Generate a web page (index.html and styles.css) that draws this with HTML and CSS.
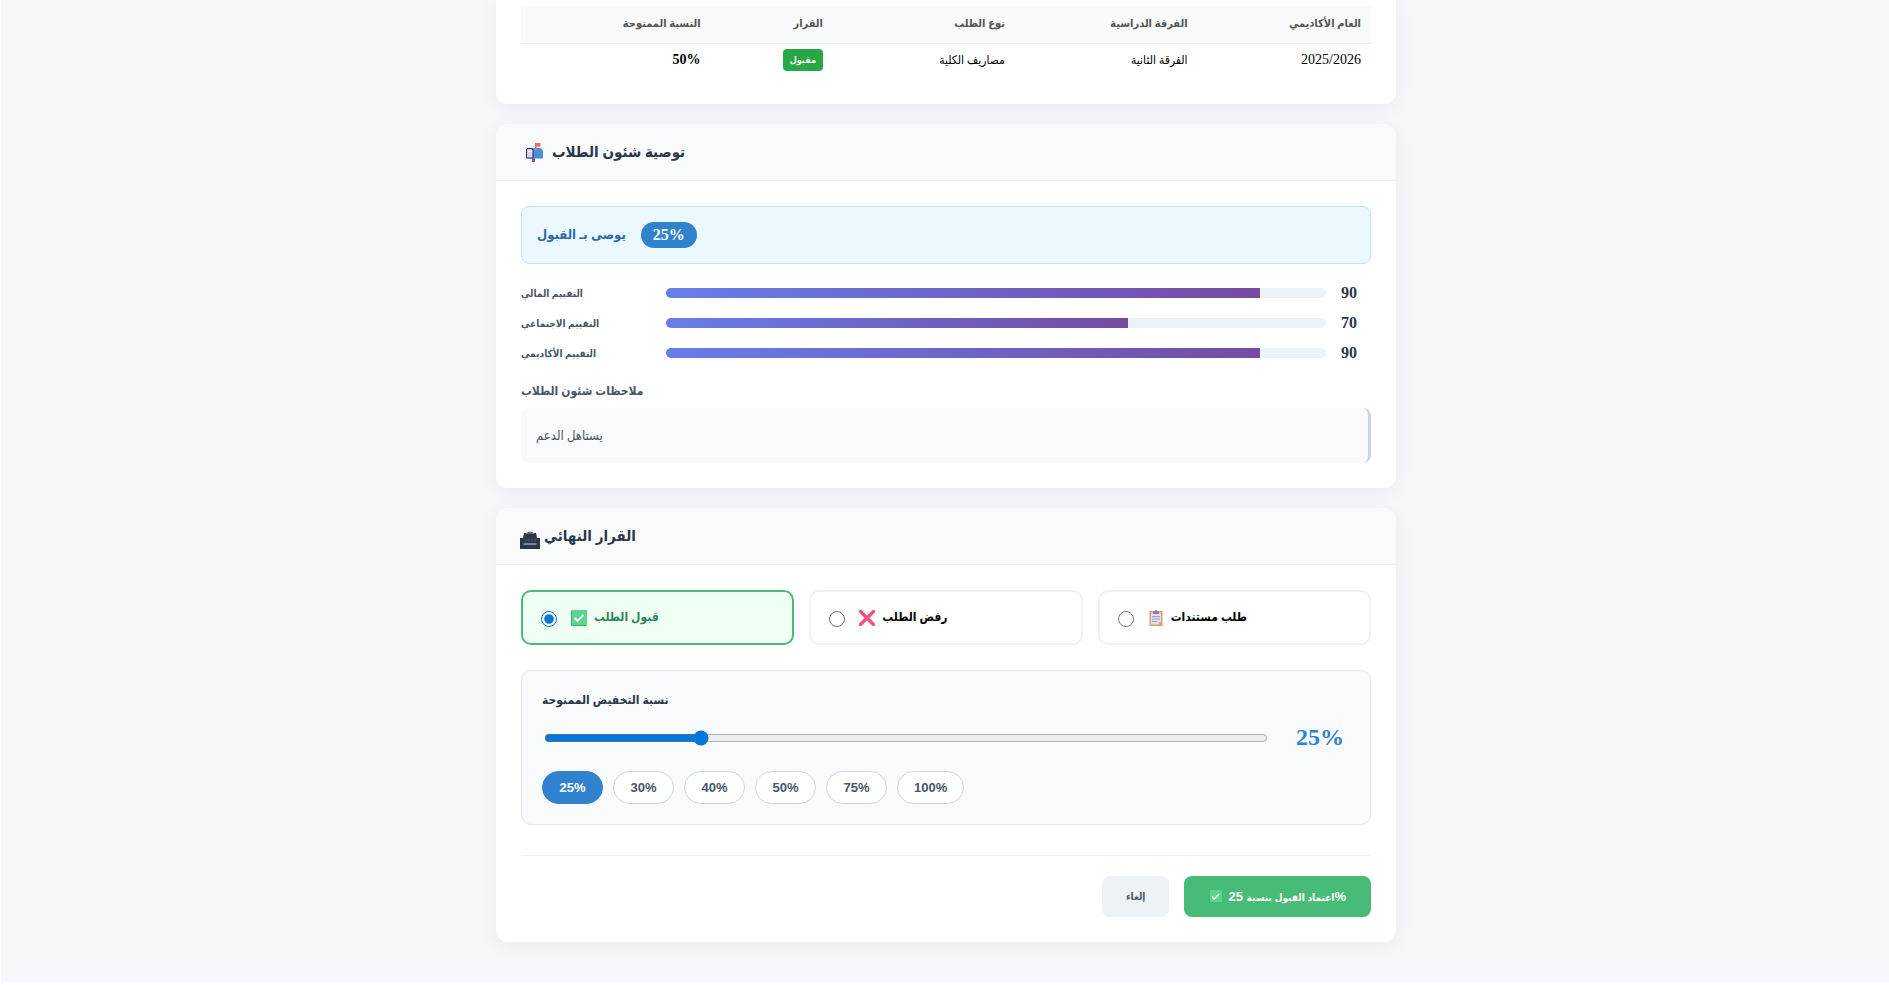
FILE: index.html
```html
<!DOCTYPE html>
<html lang="ar">
<head>
  <meta charset="UTF-8">
  <title>مراجعة طلب الدعم</title>
  <link rel="stylesheet" href="styles.css">
</head>
<body>
  <div class="page">
    <main class="container">

      <section class="card card-history">
        <table class="history-table" dir="rtl">
          <colgroup>
            <col class="col-year">
            <col class="col-level">
            <col class="col-type">
            <col class="col-decision">
            <col class="col-percent">
          </colgroup>
          <thead>
            <tr>
              <th>العام الأكاديمي</th>
              <th>الفرقة الدراسية</th>
              <th>نوع الطلب</th>
              <th>القرار</th>
              <th>النسبة الممنوحة</th>
            </tr>
          </thead>
          <tbody>
            <tr>
              <td class="num">2025/2026</td>
              <td>الفرقة الثانية</td>
              <td>مصاريف الكلية</td>
              <td><span class="badge">مقبول</span></td>
              <td class="num"><strong dir="ltr">50%</strong></td>
            </tr>
          </tbody>
        </table>
      </section>

      <section class="card">
        <div class="card-header">
          <svg class="icon-mailbox" viewBox="0 0 18 20" aria-hidden="true">
            <rect x="7" y="15" width="3" height="5" fill="#8b5a5a"/>
            <path d="M4 6h10a4 4 0 0 1 4 4v6.500H4z" fill="#4a90d9"/>
            <path d="M1.500 8q0-1.500 1.500-1.500h3q2 0 2 2v7.500H1.500z" fill="#d9d3e6" stroke="#33207a"/>
            <rect x="3" y="9" width="4" height="1" fill="#fff"/>
            <rect x="10" y="1" width="1.500" height="8" fill="#9b8aa0"/>
            <rect x="11" y="1" width="4.500" height="3.500" fill="#f4694c"/>
          </svg>
          <h2>توصية شئون الطلاب</h2>
        </div>
        <div class="card-body">
          <div class="recommendation">
            <span class="rec-text">يوصى بـ القبول</span>
            <span class="rec-percent">25%</span>
          </div>

          <div class="scores">
            <div class="score-row">
              <span class="score-label">التقييم المالي</span>
              <div class="score-bar"><div class="score-fill" style="width: 90%"></div></div>
              <span class="score-value">90</span>
            </div>
            <div class="score-row">
              <span class="score-label">التقييم الاجتماعي</span>
              <div class="score-bar"><div class="score-fill" style="width: 70%"></div></div>
              <span class="score-value">70</span>
            </div>
            <div class="score-row">
              <span class="score-label">التقييم الأكاديمي</span>
              <div class="score-bar"><div class="score-fill" style="width: 90%"></div></div>
              <span class="score-value">90</span>
            </div>
          </div>

          <h3 class="notes-title">ملاحظات شئون الطلاب</h3>
          <p class="notes">يستاهل الدعم</p>
        </div>
      </section>

      <section class="card">
        <div class="card-header header-decision">
          <svg class="icon-ballot" viewBox="0 -7 20 25" aria-hidden="true">
            <path d="M0 7h3l1-5h2.500Q10-.5 13.500 2H16l1 5h3v11H0z" fill="#2d3748"/>
            <path d="M6 2.500q4-1.500 8 0" stroke="#8d97a5" fill="none"/>
            <path d="M6 7v4M9 7v4M12 7v4M15 7v4" stroke="#46505f" fill="none"/>
            <path d="M3.500 13h13" stroke="#cbd5e0"/>
          </svg>
          <h2>القرار النهائي</h2>
        </div>
        <div class="card-body">
          <form>
            <div class="options">
              <label class="option selected">
                <input type="radio" name="decision" value="accept" checked>
                <svg class="icon" viewBox="0 0 16 16" aria-hidden="true">
                  <rect width="16" height="16" rx="1" fill="#3fae72"/>
                  <rect x="1" width="15" height="15" fill="#58d68d"/>
                  <path d="M3.500 8l3 3 6-6" fill="none" stroke="#fff" stroke-width="1.800"/>
                </svg>
                <span>قبول الطلب</span>
              </label>
              <label class="option">
                <input type="radio" name="decision" value="reject">
                <svg class="icon" viewBox="0 0 16 16" aria-hidden="true">
                  <path d="M1.500 1.500l13 13M14.500 1.500l-13 13" stroke="#f8507a" stroke-width="3.400" stroke-linecap="round"/>
                </svg>
                <span>رفض الطلب</span>
              </label>
              <label class="option">
                <input type="radio" name="decision" value="documents">
                <svg class="icon" viewBox="0 0 16 16" aria-hidden="true">
                  <rect x="1.500" y="1" width="13" height="15" fill="#e39a67"/>
                  <path d="M3 2.500h10v9.500l-2.500 2.500H3z" fill="#e3dcee"/>
                  <path d="M10.500 14.500V12H13z" fill="#c3b5d6"/>
                  <path d="M5 1.500h1.500a1.500 1.500 0 0 1 3 0H11V4H5z" fill="#8b7d95"/>
                  <path d="M4 6.500h8M4 9h8M4 11.500h5" stroke="#a99cbc"/>
                </svg>
                <span>طلب مستندات</span>
              </label>
            </div>

            <div class="discount">
              <label class="discount-label" for="percent">نسبة التخفيض الممنوحة</label>
              <div class="slider-row">
                <input type="range" id="percent" min="5" max="100" step="5" value="25">
                <output class="slider-value" for="percent">25%</output>
              </div>
              <div class="presets">
                <button type="button" class="preset active">25%</button>
                <button type="button" class="preset">30%</button>
                <button type="button" class="preset">40%</button>
                <button type="button" class="preset">50%</button>
                <button type="button" class="preset">75%</button>
                <button type="button" class="preset">100%</button>
              </div>
            </div>

            <div class="actions">
              <button type="button" class="btn btn-cancel">إلغاء</button>
              <button type="submit" class="btn btn-submit">
                <svg class="icon-small" viewBox="0 0 16 16" aria-hidden="true">
                  <rect width="16" height="16" rx="1" fill="#3fae72"/>
                  <rect x="1" width="15" height="15" fill="#58d68d"/>
                  <path d="M3.500 8l3 3 6-6" fill="none" stroke="#fff" stroke-width="1.800"/>
                </svg>
                <span class="submit-text"><bdi>25</bdi> <bdi class="submit-label">اعتماد القبول بنسبة</bdi><bdi>%</bdi></span>
              </button>
            </div>
          </form>
        </div>
      </section>

    </main>
  </div>
</body>
</html>
```
FILE: styles.css
```css
* { box-sizing: border-box; }
body {
  margin: 0;
  background: #fff;
  font-family: "Liberation Serif", "DejaVu Sans Condensed", "DejaVu Sans", serif;
  font-size: 16px;
}
.page {
  background: #f5f7fb;
  border-left: 1px solid #fff;
  padding: 0 0 40px 2px;
}
.container {
  max-width: 900px;
  margin: 0 auto;
  display: flex;
  flex-direction: column;
  gap: 20px;
}
.card {
  background: #fff;
  border-radius: 12px;
  overflow: hidden;
  box-shadow: 0 4px 20px rgba(0,0,0,0.05);
}
.card-history {
  border-radius: 0 0 12px 12px;
  padding: 6px 25px 25px;
}
.history-table {
  width: 100%;
  table-layout: fixed;
  border-collapse: collapse;
  font-size: 12px;
}
.col-year { width: 20.4%; }
.col-level { width: 21.5%; }
.col-type { width: 21.4%; }
.col-decision { width: 14.4%; }
.col-percent { width: 22.3%; }
.history-table th, .history-table td {
  height: 36px;
  padding: 0 10px 2px;
  text-align: right;
}
.history-table th {
  height: 37px;
  background: #f8f9fa;
  border-bottom: 1px solid #e9ecef;
  color: #555;
  font-size: 11px;
  font-weight: bold;
}
.history-table .num { font-size: 14px; }
.badge {
  display: inline-block;
  background: #28a745;
  color: #fff;
  padding: 0 7px;
  border-radius: 4px;
  font-size: 9px;
  line-height: 22px;
  font-weight: bold;
}
.card-header {
  display: flex;
  align-items: center;
  gap: 9px;
  height: 57px;
  padding: 0 29px;
  background: #f8fafc;
  border-bottom: 1px solid #edf2f7;
}
.header-decision { gap: 4px; padding: 0 24px; }
.card-header h2 {
  margin: 0;
  font-size: 15px;
  color: #2d3748;
}
.icon-mailbox { width: 18px; height: 20px; }
.icon-ballot { width: 20px; height: 25px; }
.card-body { padding: 25px; }
.recommendation {
  display: flex;
  align-items: center;
  gap: 15px;
  padding: 15px;
  margin-bottom: 20px;
  background: #ebf8ff;
  border: 1px solid #bee3f8;
  border-radius: 8px;
}
.rec-text {
  color: #2b6cb0;
  font-size: 13px;
  font-weight: bold;
}
.rec-percent {
  background: #3182ce;
  color: #fff;
  padding: 4px 12px;
  border-radius: 20px;
  font-weight: bold;
  line-height: 18px;
}
.scores {
  display: flex;
  flex-direction: column;
  gap: 12px;
  margin-bottom: 20px;
}
.score-row {
  display: flex;
  align-items: center;
  gap: 15px;
  height: 18px;
}
.score-label {
  width: 130px;
  font-size: 10px;
  font-weight: bold;
  color: #4a5568;
}
.score-bar {
  flex: 1;
  height: 10px;
  background: #edf2f7;
  border-radius: 5px;
  overflow: hidden;
}
.score-fill {
  height: 100%;
  background: linear-gradient(90deg, #667eea, #764ba2);
}
.score-value {
  width: 30px;
  font-weight: bold;
  color: #2d3748;
}
.notes-title {
  margin: 0 0 8px;
  font-size: 12px;
  line-height: 18px;
  color: #4a5568;
}
.notes {
  margin: 0;
  padding: 15px;
  font-size: 13px;
  line-height: 25px;
  color: #4a5568;
  background: #f8fafc;
  border-right: 3px solid #cbd5e0;
  border-radius: 8px;
}
.options {
  display: grid;
  grid-template-columns: repeat(3, 1fr);
  gap: 15px;
  margin-bottom: 25px;
}
.option {
  display: flex;
  align-items: center;
  height: 55px;
  padding: 0 18px;
  border: 2px solid #edf2f7;
  border-radius: 10px;
  font-size: 12px;
  font-weight: bold;
  cursor: pointer;
}
.option input {
  width: 16px;
  height: 16px;
  margin: 3px 14px 0 0;
  accent-color: #0078d7;
}
.option .icon { margin-right: 7px; }
.option.selected {
  border-color: #48bb78;
  background: #f0fff4;
  color: #2f855a;
}
.icon { width: 16px; height: 16px; }
.icon-small { width: 13px; height: 13px; }
.discount {
  padding: 20px;
  background: #f8fafc;
  border: 1px solid #e2e8f0;
  border-radius: 10px;
}
.discount-label {
  display: block;
  margin-bottom: 15px;
  font-size: 12px;
  line-height: 18px;
  font-weight: bold;
  color: #2d3748;
}
.slider-row {
  display: flex;
  align-items: center;
  gap: 20px;
  margin-bottom: 20px;
}
.slider-row input {
  flex: 1;
  margin: 2px;
  accent-color: #0078d7;
}
.slider-value {
  min-width: 60px;
  text-align: center;
  font-size: 24px;
  line-height: 27px;
  font-weight: bold;
  color: #3182ce;
}
.presets { display: flex; gap: 10px; }
.preset {
  min-width: 61px;
  padding: 8px 16px;
  background: #fff;
  border: 1px solid #cbd5e0;
  border-radius: 20px;
  font: bold 13px/15px "Liberation Sans", sans-serif;
  color: #4a5568;
  cursor: pointer;
}
.preset.active {
  background: #3182ce;
  border-color: #3182ce;
  color: #fff;
}
.actions {
  display: flex;
  justify-content: flex-end;
  gap: 15px;
  margin-top: 30px;
  padding-top: 20px;
  border-top: 1px solid #edf2f7;
}
.btn {
  height: 41px;
  border: none;
  border-radius: 8px;
  font-family: "Liberation Sans", "DejaVu Sans Condensed", "DejaVu Sans", sans-serif;
  font-size: 10px;
  font-weight: bold;
  cursor: pointer;
}
.btn-cancel {
  padding: 0 24px;
  background: #edf2f7;
  color: #4a5568;
}
.btn-submit {
  display: flex;
  align-items: center;
  gap: 6px;
  padding: 0 25px;
  background: #48bb78;
  color: #fff;
}
.submit-text { font-size: 13px; }
.submit-label { font-size: 10px; }
```
